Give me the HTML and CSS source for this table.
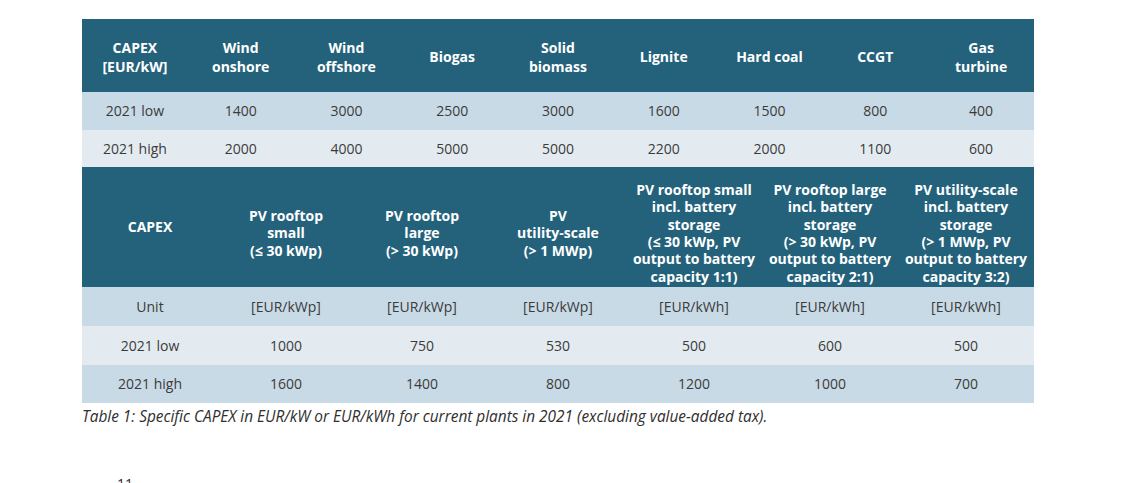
FILE: index.html
```html
<!DOCTYPE html>
<html lang="en">
<head>
<meta charset="utf-8">
<title>CAPEX table</title>
<link rel="stylesheet" href="styles.css">
</head>
<body>
<div class="page">
  <table class="capex capex-one">
    <colgroup>
      <col><col><col><col><col><col><col><col><col>
    </colgroup>
    <thead>
      <tr class="head">
        <th>CAPEX<br>[EUR/kW]</th>
        <th>Wind<br>onshore</th>
        <th>Wind<br>offshore</th>
        <th>Biogas</th>
        <th>Solid<br>biomass</th>
        <th>Lignite</th>
        <th>Hard coal</th>
        <th>CCGT</th>
        <th>Gas<br>turbine</th>
      </tr>
    </thead>
    <tbody>
      <tr class="dark r38">
        <td>2021 low</td><td>1400</td><td>3000</td><td>2500</td><td>3000</td><td>1600</td><td>1500</td><td>800</td><td>400</td>
      </tr>
      <tr class="light r37">
        <td>2021 high</td><td>2000</td><td>4000</td><td>5000</td><td>5000</td><td>2200</td><td>2000</td><td>1100</td><td>600</td>
      </tr>
    </tbody>
  </table>
  <table class="capex capex-two">
    <thead>
      <tr class="head head-tall">
        <th>CAPEX</th>
        <th>PV rooftop<br>small<br>(≤ 30 kWp)</th>
        <th>PV rooftop<br>large<br>(&gt; 30 kWp)</th>
        <th>PV<br>utility-scale<br>(&gt; 1 MWp)</th>
        <th>PV rooftop small<br>incl. battery<br>storage<br>(≤ 30 kWp, PV<br>output to battery<br>capacity 1:1)</th>
        <th>PV rooftop large<br>incl. battery<br>storage<br>(&gt; 30 kWp, PV<br>output to battery<br>capacity 2:1)</th>
        <th>PV utility-scale<br>incl. battery<br>storage<br>(&gt; 1 MWp, PV<br>output to battery<br>capacity 3:2)</th>
      </tr>
    </thead>
    <tbody>
      <tr class="dark r39">
        <td>Unit</td><td>[EUR/kWp]</td><td>[EUR/kWp]</td><td>[EUR/kWp]</td><td>[EUR/kWh]</td><td>[EUR/kWh]</td><td>[EUR/kWh]</td>
      </tr>
      <tr class="light r39">
        <td>2021 low</td><td>1000</td><td>750</td><td>530</td><td>500</td><td>600</td><td>500</td>
      </tr>
      <tr class="dark r38">
        <td>2021 high</td><td>1600</td><td>1400</td><td>800</td><td>1200</td><td>1000</td><td>700</td>
      </tr>
    </tbody>
  </table>
  <p class="caption">Table 1: Specific CAPEX in EUR/kW or EUR/kWh for current plants in 2021 (excluding value-added tax).</p>
  <p class="page-num">11</p>
</div>
</body>
</html>
```

FILE: styles.css
```css
html, body {
  margin: 0;
  padding: 0;
  background: #ffffff;
}

body {
  font-family: "Open Sans", "Noto Sans", "Liberation Sans", sans-serif;
  color: #3a3a3a;
  overflow: hidden;
}

.page {
  padding: 19px 0 0 82px;
  width: 952px;
}

.capex {
  width: 952px;
  border-collapse: collapse;
  border-spacing: 0;
  table-layout: fixed;
}

.capex th,
.capex td {
  padding: 0 2px;
  text-align: center;
  vertical-align: middle;
  font-size: 14px;
}

.capex th {
  font-weight: 700;
  color: #ffffff;
  line-height: 19px;
  padding-top: 2px;
}

.capex td {
  font-weight: 400;
  color: #3b3b3b;
  line-height: 18px;
}

.head {
  background: #24627c;
  height: 73px;
}

.head-tall {
  height: 120px;
}

.head-tall th {
  line-height: 17.4px;
  padding-top: 12px;
  padding-bottom: 0;
}

.head-tall th:first-child {
  padding-top: 0;
}

.dark {
  background: #c8dae5;
}

.light {
  background: #e3ebf1;
}

.r37 { height: 37px; }
.r38 { height: 38px; }
.r39 { height: 39px; }

.caption {
  margin: 4px 0 0 0;
  font-size: 15.4px;
  font-style: italic;
  line-height: 20px;
  color: #2e2e2e;
}

.page-num {
  margin: 47px 0 0 35px;
  font-size: 14px;
  line-height: 19px;
  color: #2e2e2e;
}
```
